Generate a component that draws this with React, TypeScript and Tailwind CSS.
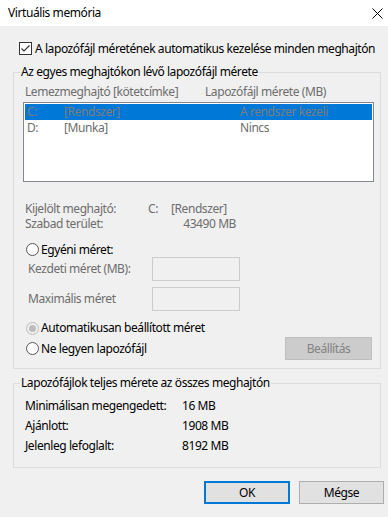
import React from 'react';

const font = { fontFamily: '"Noto Sans", "Segoe UI", sans-serif' };

const Radio: React.FC<{ disabled?: boolean; checked?: boolean }> = ({ disabled, checked }) => (
  <span
    className={`w-[13px] h-[13px] rounded-full border flex items-center justify-center shrink-0 ${
      disabled ? 'border-[#bcbcbc] bg-[#f0f0f0]' : 'border-[#555555] bg-white'
    }`}
  >
    {checked && <span className={`w-[7px] h-[7px] rounded-full ${disabled ? 'bg-[#bcbcbc]' : 'bg-[#333333]'}`} />}
  </span>
);

export default function App() {
  return (
    <div
      className="w-[388px] h-[517px] bg-[#f0f0f0] text-[12px] leading-[16px] tracking-[-0.42px] text-black overflow-hidden whitespace-nowrap"
      style={font}
    >
      {/* Title bar */}
      <div className="h-[26px] bg-white flex items-center justify-between pl-[8px] pr-[5px]">
        <span>Virtuális memória</span>
        <svg width="11" height="11" viewBox="0 0 11 11">
          <path d="M0.5 0.5 L10.5 10.5 M10.5 0.5 L0.5 10.5" stroke="#000" strokeWidth="1" />
        </svg>
      </div>

      {/* Automatic checkbox */}
      <div className="mt-[15px] h-[15px] flex items-center pl-[19px]">
        <span className="w-[13px] h-[13px] border border-[#333333] bg-white flex items-center justify-center">
          <svg width="11" height="11" viewBox="0 0 11 11">
            <path d="M1.5 5.5 L4 8 L9.5 2.5" stroke="#333" strokeWidth="1.2" fill="none" />
          </svg>
        </span>
        <span className="ml-[3px]">A lapozófájl méretének automatikus kezelése minden meghajtón</span>
      </div>

      {/* Per-drive group */}
      <fieldset className="mt-[8px] ml-[13px] w-[368px] border border-[#dcdcdc] pb-[8px]">
        <legend className="ml-[6px] px-[1px]">Az egyes meghajtókon lévő lapozófájl mérete</legend>

        <div className="mt-[4px] h-[16px] flex text-[#6d6d6d] pl-[11px]">
          <span className="w-[180px]">Lemezmeghajtó [kötetcímke]</span>
          <span>Lapozófájl mérete (MB)</span>
        </div>

        <div className="mt-[2px] ml-[9px] w-[351px] h-[80px] border border-[#828790] bg-white p-[1px] text-[#6d6d6d]">
          <div className="h-[16px] flex bg-[#0078d7] pl-[2px] text-[#7d7d7d]">
            <span className="w-[37px]">C:</span>
            <span className="w-[176px]">[Rendszer]</span>
            <span>A rendszer kezeli</span>
          </div>
          <div className="h-[16px] flex pl-[2px]">
            <span className="w-[37px]">D:</span>
            <span className="w-[176px]">[Munka]</span>
            <span>Nincs</span>
          </div>
        </div>

        <div className="mt-[20px] pl-[11px] text-[#6d6d6d] leading-[14px]">
          <div className="h-[14px] flex">
            <span className="w-[123px]">Kijelölt meghajtó:</span>
            <span>C:</span>
            <span className="ml-[13px]">[Rendszer]</span>
          </div>
          <div className="h-[15px] flex items-end">
            <span className="w-[123px]">Szabad terület:</span>
            <span className="w-[88px] text-right">43490 MB</span>
          </div>
        </div>

        <div className="mt-[11px] h-[15px] flex items-center pl-[12px]">
          <Radio />
          <span className="ml-[2px]">Egyéni méret:</span>
        </div>

        <div className="h-[24px] flex items-center pl-[14px] text-[#6d6d6d]">
          <span className="w-[124px]">Kezdeti méret (MB):</span>
          <span className="w-[88px] h-[24px] border border-[#cccccc] bg-[#f0f0f0]" />
        </div>

        <div className="mt-[6px] h-[24px] flex items-center pl-[14px] text-[#6d6d6d]">
          <span className="w-[124px]">Maximális méret</span>
          <span className="w-[88px] h-[24px] border border-[#cccccc] bg-[#f0f0f0]" />
        </div>

        <div className="mt-[9px] h-[16px] flex items-center pl-[12px]">
          <Radio disabled checked />
          <span className="ml-[2px]">Automatikusan beállított méret</span>
        </div>

        <div className="mt-[1px] h-[23px] flex items-center pl-[12px]">
          <Radio />
          <span className="ml-[2px]">Ne legyen lapozófájl</span>
          <span className="ml-auto mr-[8px] w-[87px] h-[23px] bg-[#cccccc] border border-[#bfbfbf] text-[#838383] flex items-center justify-center">
            Beállítás
          </span>
        </div>
      </fieldset>

      {/* Totals group */}
      <fieldset className="mt-[6px] ml-[13px] w-[368px] border border-[#dcdcdc] pb-[11px]">
        <legend className="ml-[6px] px-[1px]">Lapozófájlok teljes mérete az összes meghajtón</legend>
        <div className="mt-[5px] pl-[11px]">
          {[
            ['Minimálisan megengedett:', '16 MB'],
            ['Ajánlott:', '1908 MB'],
            ['Jelenleg lefoglalt:', '8192 MB'],
          ].map(([label, value]) => (
            <div key={label} className="h-[20px] flex items-center">
              <span className="w-[157px]">{label}</span>
              <span>{value}</span>
            </div>
          ))}
        </div>
      </fieldset>

      {/* Dialog buttons */}
      <div className="mt-[13px] flex pl-[204px] gap-[9px]">
        <button className="w-[86px] h-[23px] bg-[#e1e1e1] border-2 border-[#0078d7] flex items-center justify-center">
          OK
        </button>
        <button className="w-[85px] h-[23px] bg-[#e1e1e1] border border-[#adadad] flex items-center justify-center">
          Mégse
        </button>
      </div>
    </div>
  );
}
